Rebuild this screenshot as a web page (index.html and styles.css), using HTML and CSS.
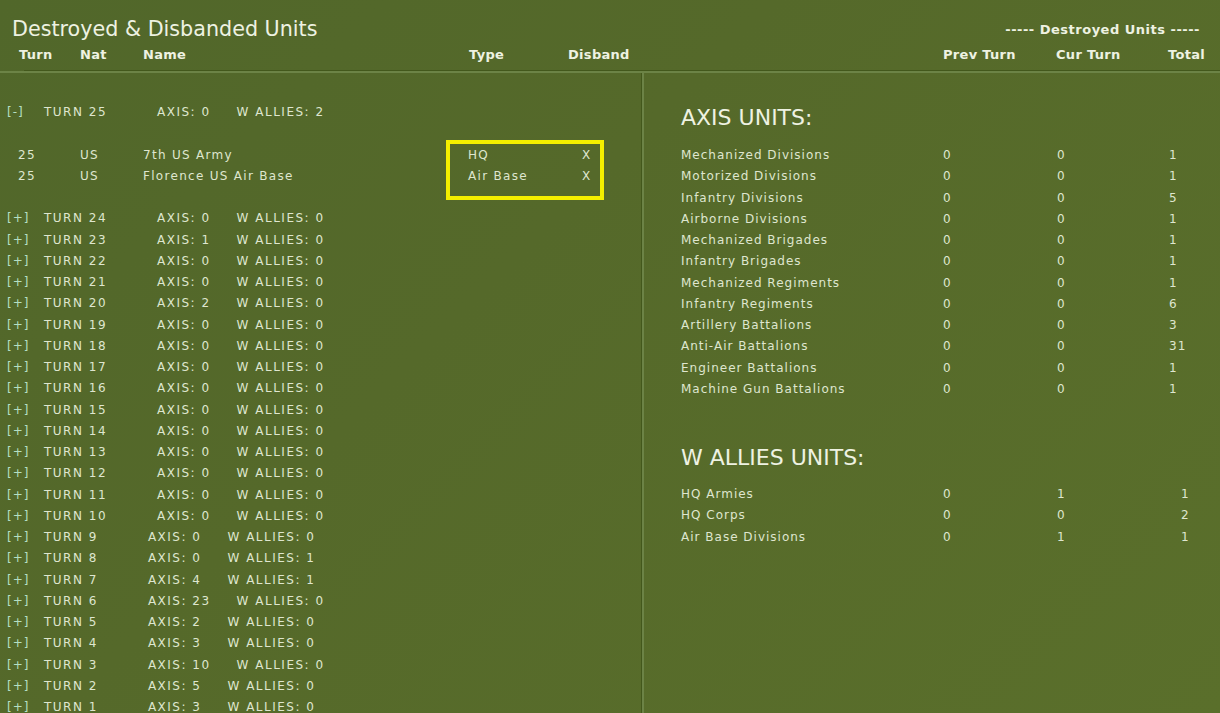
FILE: index.html
```html
<!DOCTYPE html>
<html>
<head>
<meta charset="utf-8">
<link rel="stylesheet" href="styles.css">
</head>
<body>
<div class="screen">
  <header class="top">
    <div class="title-row">
      <h1 class="title">Destroyed &amp; Disbanded Units</h1>
      <div class="subtitle">----- Destroyed Units -----</div>
    </div>
    <div class="col-heads">
      <span class="h-turn">Turn</span>
      <span class="h-nat">Nat</span>
      <span class="h-name">Name</span>
      <span class="h-type">Type</span>
      <span class="h-disband">Disband</span>
      <span class="h-prev">Prev Turn</span>
      <span class="h-cur">Cur Turn</span>
      <span class="h-total">Total</span>
    </div>
  </header>
  <div class="rule-dark"></div>
  <div class="rule-light"></div>
  <main class="body">
    <section class="left">
      <div class="trow"><span class="tog">[-]</span><span class="tlabel">TURN 25</span><span class="axis">AXIS: 0</span><span class="allies">W ALLIES: 2</span></div>
      <div class="blank"></div>
      <div class="units">
        <div class="urow"><span>25</span><span>US</span><span>7th US Army</span><span>HQ</span><span>X</span></div>
        <div class="urow"><span>25</span><span>US</span><span>Florence US Air Base</span><span>Air Base</span><span>X</span></div>
        <div class="highlight"></div>
      </div>
      <div class="blank"></div>
      <div class="trow"><span class="tog">[+]</span><span class="tlabel">TURN 24</span><span class="axis">AXIS: 0</span><span class="allies">W ALLIES: 0</span></div>
      <div class="trow"><span class="tog">[+]</span><span class="tlabel">TURN 23</span><span class="axis">AXIS: 1</span><span class="allies">W ALLIES: 0</span></div>
      <div class="trow"><span class="tog">[+]</span><span class="tlabel">TURN 22</span><span class="axis">AXIS: 0</span><span class="allies">W ALLIES: 0</span></div>
      <div class="trow"><span class="tog">[+]</span><span class="tlabel">TURN 21</span><span class="axis">AXIS: 0</span><span class="allies">W ALLIES: 0</span></div>
      <div class="trow"><span class="tog">[+]</span><span class="tlabel">TURN 20</span><span class="axis">AXIS: 2</span><span class="allies">W ALLIES: 0</span></div>
      <div class="trow"><span class="tog">[+]</span><span class="tlabel">TURN 19</span><span class="axis">AXIS: 0</span><span class="allies">W ALLIES: 0</span></div>
      <div class="trow"><span class="tog">[+]</span><span class="tlabel">TURN 18</span><span class="axis">AXIS: 0</span><span class="allies">W ALLIES: 0</span></div>
      <div class="trow"><span class="tog">[+]</span><span class="tlabel">TURN 17</span><span class="axis">AXIS: 0</span><span class="allies">W ALLIES: 0</span></div>
      <div class="trow"><span class="tog">[+]</span><span class="tlabel">TURN 16</span><span class="axis">AXIS: 0</span><span class="allies">W ALLIES: 0</span></div>
      <div class="trow"><span class="tog">[+]</span><span class="tlabel">TURN 15</span><span class="axis">AXIS: 0</span><span class="allies">W ALLIES: 0</span></div>
      <div class="trow"><span class="tog">[+]</span><span class="tlabel">TURN 14</span><span class="axis">AXIS: 0</span><span class="allies">W ALLIES: 0</span></div>
      <div class="trow"><span class="tog">[+]</span><span class="tlabel">TURN 13</span><span class="axis">AXIS: 0</span><span class="allies">W ALLIES: 0</span></div>
      <div class="trow"><span class="tog">[+]</span><span class="tlabel">TURN 12</span><span class="axis">AXIS: 0</span><span class="allies">W ALLIES: 0</span></div>
      <div class="trow"><span class="tog">[+]</span><span class="tlabel">TURN 11</span><span class="axis">AXIS: 0</span><span class="allies">W ALLIES: 0</span></div>
      <div class="trow"><span class="tog">[+]</span><span class="tlabel">TURN 10</span><span class="axis">AXIS: 0</span><span class="allies">W ALLIES: 0</span></div>
      <div class="trow"><span class="tog">[+]</span><span class="tlabel">TURN 9</span><span class="axis">AXIS: 0</span><span class="allies">W ALLIES: 0</span></div>
      <div class="trow"><span class="tog">[+]</span><span class="tlabel">TURN 8</span><span class="axis">AXIS: 0</span><span class="allies">W ALLIES: 1</span></div>
      <div class="trow"><span class="tog">[+]</span><span class="tlabel">TURN 7</span><span class="axis">AXIS: 4</span><span class="allies">W ALLIES: 1</span></div>
      <div class="trow"><span class="tog">[+]</span><span class="tlabel">TURN 6</span><span class="axis">AXIS: 23</span><span class="allies">W ALLIES: 0</span></div>
      <div class="trow"><span class="tog">[+]</span><span class="tlabel">TURN 5</span><span class="axis">AXIS: 2</span><span class="allies">W ALLIES: 0</span></div>
      <div class="trow"><span class="tog">[+]</span><span class="tlabel">TURN 4</span><span class="axis">AXIS: 3</span><span class="allies">W ALLIES: 0</span></div>
      <div class="trow"><span class="tog">[+]</span><span class="tlabel">TURN 3</span><span class="axis">AXIS: 10</span><span class="allies">W ALLIES: 0</span></div>
      <div class="trow"><span class="tog">[+]</span><span class="tlabel">TURN 2</span><span class="axis">AXIS: 5</span><span class="allies">W ALLIES: 0</span></div>
      <div class="trow"><span class="tog">[+]</span><span class="tlabel">TURN 1</span><span class="axis">AXIS: 3</span><span class="allies">W ALLIES: 0</span></div>
    </section>
    <section class="right">
      <h2 class="side-head">AXIS UNITS:</h2>
      <div class="srow"><span>Mechanized Divisions</span><span>0</span><span>0</span><span>1</span></div>
      <div class="srow"><span>Motorized Divisions</span><span>0</span><span>0</span><span>1</span></div>
      <div class="srow"><span>Infantry Divisions</span><span>0</span><span>0</span><span>5</span></div>
      <div class="srow"><span>Airborne Divisions</span><span>0</span><span>0</span><span>1</span></div>
      <div class="srow"><span>Mechanized Brigades</span><span>0</span><span>0</span><span>1</span></div>
      <div class="srow"><span>Infantry Brigades</span><span>0</span><span>0</span><span>1</span></div>
      <div class="srow"><span>Mechanized Regiments</span><span>0</span><span>0</span><span>1</span></div>
      <div class="srow"><span>Infantry Regiments</span><span>0</span><span>0</span><span>6</span></div>
      <div class="srow"><span>Artillery Battalions</span><span>0</span><span>0</span><span>3</span></div>
      <div class="srow"><span>Anti-Air Battalions</span><span>0</span><span>0</span><span>31</span></div>
      <div class="srow"><span>Engineer Battalions</span><span>0</span><span>0</span><span>1</span></div>
      <div class="srow"><span>Machine Gun Battalions</span><span>0</span><span>0</span><span>1</span></div>
      <h2 class="side-head allies-head">W ALLIES UNITS:</h2>
      <div class="srow allied"><span>HQ Armies</span><span>0</span><span>1</span><span>1</span></div>
      <div class="srow allied"><span>HQ Corps</span><span>0</span><span>0</span><span>2</span></div>
      <div class="srow allied"><span>Air Base Divisions</span><span>0</span><span>1</span><span>1</span></div>
    </section>
  </main>
</div>
</body>
</html>
```

FILE: styles.css
```css
html, body {
  margin: 0;
  padding: 0;
  height: 100%;
  overflow: hidden;
}
body {
  background: #546a28;
  color: #dfe6cf;
  font-family: "DejaVu Sans", Verdana, sans-serif;
}
.screen {
  width: 1220px;
  height: 713px;
  display: flex;
  flex-direction: column;
  background: linear-gradient(135deg, #51672a 0%, #55692a 40%, #5a6f2b 100%);
}
.top {
  height: 70px;
  display: flex;
  flex-direction: column;
}
.title-row {
  display: flex;
  justify-content: space-between;
  align-items: center;
  height: 42px;
  padding: 16px 20px 0 12px;
  box-sizing: border-box;
}
.title {
  margin: 0;
  font-weight: normal;
  font-size: 20.7px;
  color: #eef2e2;
  letter-spacing: 0;
  line-height: 26px;
}
.subtitle {
  font-size: 13px;
  font-weight: bold;
  color: #eef2e2;
  letter-spacing: 0.5px;
  padding-top: 0;
}
.col-heads {
  display: grid;
  grid-template-columns: 61px 63px 326px 99px 375px 113px 112px auto;
  padding-left: 19px;
  font-size: 13px;
  font-weight: bold;
  color: #eef2e2;
  letter-spacing: 0.3px;
  line-height: 26px;
}
.rule-dark {
  height: 1px;
  margin-left: 24px;
  background: #43581c;
}
.rule-light {
  height: 2px;
  background: #6c8346;
}
.body {
  flex: 1;
  display: flex;
  min-height: 0;
}
.left {
  width: 641px;
  border-right: 1px solid #43581c;
  padding-top: 29px;
  font-size: 12px;
  letter-spacing: 1.5px;
}
.right {
  flex: 1;
  border-left: 2px solid #6c8346;
  padding-left: 37px;
  padding-top: 32px;
  font-size: 12px;
  letter-spacing: 1px;
}
.trow, .urow, .srow, .blank {
  height: 21.26px;
  line-height: 21.26px;
  white-space: nowrap;
}
.trow {
  display: flex;
  padding-left: 7px;
}
.tog {
  width: 37px;
  color: #b5dfc3;
  letter-spacing: 1px;
}
.axis {
  margin-left: 50px;
}
.allies {
  margin-left: 26px;
}
.units {
  position: relative;
}
.urow {
  display: grid;
  grid-template-columns: 62px 63px 325px 114px auto;
  padding-left: 18px;
  letter-spacing: 1.3px;
}
.highlight {
  position: absolute;
  left: 446px;
  top: -5px;
  width: 158px;
  height: 60px;
  box-sizing: border-box;
  border: 4px solid #f4ef00;
}
.side-head {
  margin: 0 0 14px 0;
  font-weight: normal;
  font-size: 22px;
  line-height: 26px;
  letter-spacing: 0;
  color: #eef2e2;
}
.allies-head {
  margin-top: 45px;
}
.allies-head + .srow {
  margin-top: -1px;
}
.srow {
  display: grid;
  grid-template-columns: 262px 114px 112px auto;
}
.srow.allied span:last-child {
  padding-left: 12px;
}
```
